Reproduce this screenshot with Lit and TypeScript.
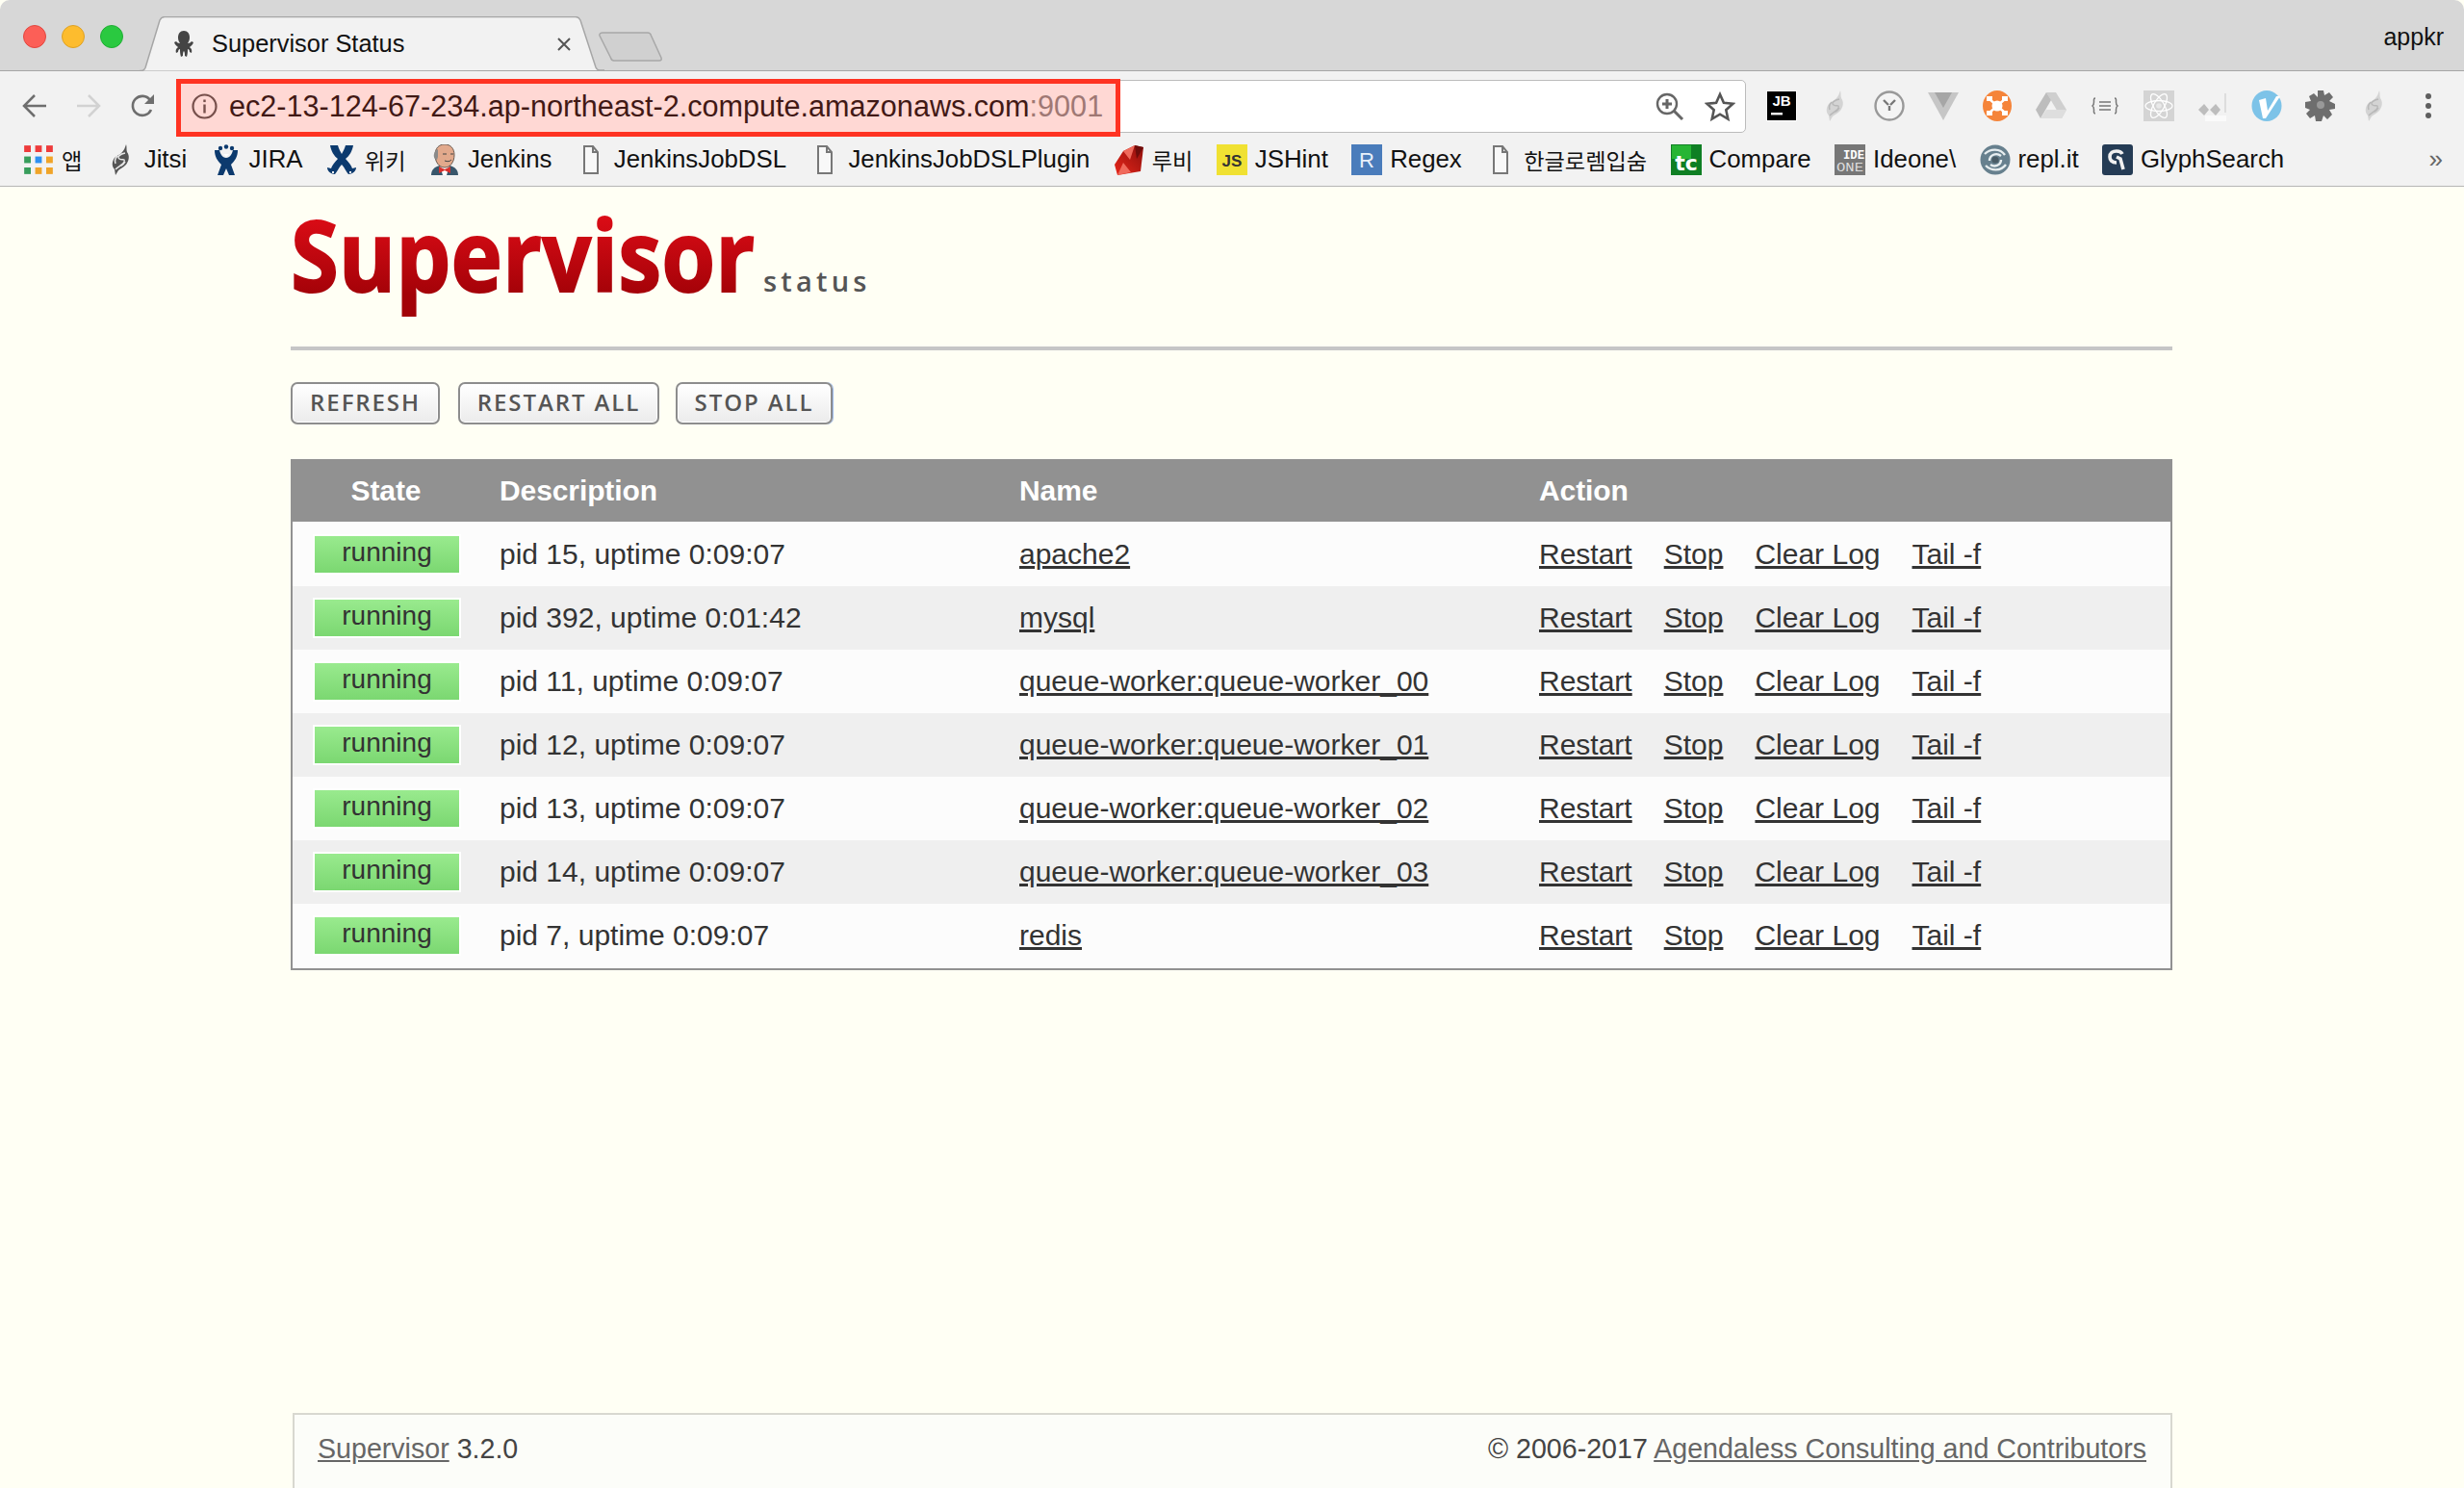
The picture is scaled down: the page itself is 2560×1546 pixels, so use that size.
import { LitElement, html, css } from "lit";
import { customElement } from "lit/decorators.js";

const feather = (c: string, line: string) => html`<svg class="ico" viewBox="0 0 32 32"><path fill="${c}" d="M21 0c1 3 0 5 1 8 3 4 2 9-1 13-3 3-6 4-8 6l-3 5-1-6c-3-3-3-8 0-12 3-3 6-3 8-6 2-2 3-5 4-8z"/><path fill="none" stroke="${line}" stroke-width="1.500" d="M20 9c-5 1-9 4-6 6 3 2 6-1 5 3-1 3-6 5-9 8M12 12c-2 2-3 5-2 8M16 22c2-1 3-2 4-4"/></svg>`;
const doc = html`<svg class="ico doc" viewBox="0 0 18 32"><path fill="#f8f8f8" stroke="#777" stroke-width="2" d="M2 2h9l5 6v22H2z"/><path fill="none" stroke="#777" stroke-width="2" d="M11 2v6h5"/></svg>`;

const icons: Record<string, unknown> = {
  apps: html`<svg class="ico" viewBox="0 0 28 28">
    <rect x="1" y="1" width="6" height="6" fill="#ee3b3b"/><rect x="11" y="1" width="6" height="6" fill="#ee3b3b"/><rect x="21" y="1" width="6" height="6" fill="#ee3b3b"/>
    <rect x="1" y="11" width="6" height="6" fill="#389e5c"/><rect x="11" y="11" width="6" height="6" fill="#2e90f0"/><rect x="21" y="11" width="6" height="6" fill="#f0a428"/>
    <rect x="1" y="21" width="6" height="6" fill="#389e5c"/><rect x="11" y="21" width="6" height="6" fill="#f0a428"/><rect x="21" y="21" width="6" height="6" fill="#f0a428"/></svg>`,
  jitsi: feather("#555", "#e8e8e8"),
  jira: html`<svg class="ico" viewBox="0 0 32 32"><circle cx="16" cy="2.500" r="2.200" fill="#0c3a6e"/><circle cx="10" cy="4" r="2.200" fill="#0c3a6e"/><circle cx="22" cy="4" r="2.200" fill="#0c3a6e"/><path fill="#0c3a6e" d="M4 6l5 0c1 4 3 8 7 8s6-4 7-8l5 0c0 7-3 11-7 15l4 11h-6l-3-7-3 7H7l4-11C7 17 4 13 4 6z"/><path fill="#fff" d="M13 10h6l-3 3z"/></svg>`,
  wiki: html`<svg class="ico" viewBox="0 0 32 32"><path fill="#0c3a6e" d="M4 1h8c1 4 3 7 4 9 1-2 3-5 4-9h8c-1 6-4 11-8 14 3 3 6 7 7 10l4-1c0 4-4 7-8 7-2-2-4-7-7-10-3 3-5 8-7 10-4 0-8-3-8-7l4 1c1-3 4-7 7-10C8 12 5 7 4 1z"/><path fill="#f2f2f2" d="M6 28h2v2H6zM24 28h2v2h-2z"/></svg>`,
  jenkins: html`<svg class="ico" viewBox="0 0 32 32"><path fill="#38566b" d="M2 32c0-6 4-9 9-10h10c5 1 9 4 9 10z"/><path fill="#fff" d="M11 22h10l-3 10h-4z"/><path fill="#e2a98c" stroke="#6a5a50" stroke-width="1" d="M6 11C6 4 10 0 16 0s10 4 10 11c0 7-4 13-10 13S6 18 6 11z"/><path fill="#8a8a8a" d="M5 10c1-3 2-4 4-5v8l-1 3c-2 0-4-3-3-6z"/><path fill="none" stroke="#444" stroke-width="1" d="M14 10h4M22 10h3M16 17c3 1 5 1 7-1"/><path fill="#d8302c" d="M10 23l6 3 6-3v7l-6-3-6 3z"/></svg>`,
  ruby: html`<svg class="ico" viewBox="0 0 32 32"><defs><linearGradient id="rb" x1="0" y1="1" x2="1" y2="0"><stop offset="0" stop-color="#e8261a"/><stop offset="1" stop-color="#8c0f0c"/></linearGradient></defs><path fill="url(#rb)" d="M22 1l9 2-3 25L4 32 1 21 10 7z"/><path fill="#f06a5c" d="M10 7l12-6-5 15zM4 32l6-13 8 10z"/><path fill="#6d0c0a" d="M22 1l9 2-7 12z"/></svg>`,
  js: html`<svg class="ico" viewBox="0 0 32 32"><rect width="32" height="32" fill="#f0e132"/><text x="16" y="23" text-anchor="middle" font-family="Liberation Sans, sans-serif" font-weight="700" font-size="17" fill="#333">JS</text></svg>`,
  r: html`<svg class="ico" viewBox="0 0 32 32"><rect width="32" height="32" fill="#4a7cbb"/><text x="16" y="24" text-anchor="middle" font-family="Liberation Sans, sans-serif" font-size="22" fill="#e8f0fa">R</text></svg>`,
  tc: html`<svg class="ico" viewBox="0 0 32 32"><rect width="32" height="32" fill="#0f7f24"/><rect x="1" y="1" width="20" height="14" fill="#27b534"/><text x="16" y="27" text-anchor="middle" font-family="DejaVu Sans, sans-serif" font-weight="700" font-size="22" fill="#fff">tc</text></svg>`,
  ide: html`<svg class="ico" viewBox="0 0 32 32"><rect width="32" height="32" fill="#777"/><text x="31" y="15" text-anchor="end" font-family="Liberation Mono, monospace" font-weight="700" font-size="13" fill="#fff" textLength="22" lengthAdjust="spacingAndGlyphs">IDE</text><text x="2" y="28" font-family="Liberation Mono, monospace" font-size="13" fill="#ddd" textLength="28" lengthAdjust="spacingAndGlyphs">ONE</text></svg>`,
  repl: html`<svg class="ico" viewBox="0 0 32 32"><circle cx="16" cy="16" r="15.500" fill="#67808e"/><path fill="none" stroke="#e8eef0" stroke-width="2.400" d="M5 10c6-6 16-6 21 1M27 21c-5 7-15 7-21 1M10 17c0-6 7-9 12-5M22 16c0 6-7 8-11 5"/><circle cx="16" cy="16" r="3.600" fill="#4a5c66"/></svg>`,
  glyph: html`<svg class="ico" viewBox="0 0 32 32"><rect width="32" height="32" rx="3" fill="#253c55"/><path fill="none" stroke="#f0f0f0" stroke-width="3.600" d="M15 19c-5 0-7-3-7-6 0-4 3-6 7-6 3 0 5 1 6 3M15 13l4 2 3 11"/></svg>`,
};

const exts = [
  html`<svg class="ico" viewBox="0 0 32 32"><rect x=".5" y=".5" width="31" height="31" fill="#000" stroke="#fff"/><text x="16" y="16" text-anchor="middle" font-family="Liberation Sans, sans-serif" font-weight="700" font-size="15" fill="#fff">JB</text><rect x="5" y="23" width="12" height="2.400" fill="#fff"/></svg>`,
  feather("#d4d4d4", "#b8b8b8"),
  html`<svg class="ico" viewBox="0 0 32 32"><circle cx="16" cy="16" r="14.500" fill="#f4f4f4" stroke="#999" stroke-width="2.400"/><path fill="none" stroke="#777" stroke-width="2.400" d="M10 10l5 5M22 10l-5 5M16 16v5"/></svg>`,
  html`<svg class="ico" viewBox="0 0 32 32"><path fill="#c6c6c6" d="M0 2h32L16 31z"/><path fill="#a6a6a6" d="M7 2h18l-9 16z"/></svg>`,
  html`<svg class="ico" viewBox="0 0 32 32"><ellipse cx="16" cy="16" rx="15" ry="16" fill="#f5843a"/><path fill="none" stroke="#fff" stroke-width="2.400" d="M8 9l16 14M24 9L8 23"/><circle cx="16" cy="16" r="5.500" fill="#fff"/><rect x="5" y="6" width="6" height="5" fill="#fff"/><rect x="21" y="6" width="6" height="5" fill="#fff"/><rect x="5" y="21" width="6" height="5" fill="#fff"/><rect x="21" y="21" width="6" height="5" fill="#fff"/></svg>`,
  html`<svg class="ico" viewBox="0 0 32 32"><path fill="#cfcfcf" d="M11 2h10l11 18-5 9z"/><path fill="#bdbdbd" d="M11 2L0 20l5 9L16 10z"/><path fill="#dedede" d="M5 29h22l5-9H11z"/></svg>`,
  html`<svg class="ico" viewBox="0 0 32 32"><path fill="none" stroke="#777" stroke-width="1.500" d="M6 8c-2 0-1.500 2-1.500 4s0 3-1.500 4c1.500 1 1.500 2 1.500 4s-.5 4 1.500 4M26 8c2 0 1.500 2 1.500 4s0 3 1.500 4c-1.500 1-1.500 2-1.500 4s.5 4-1.500 4M10 12h12M10 16h12M10 20h12"/></svg>`,
  html`<svg class="ico" viewBox="0 0 32 32"><rect width="32" height="32" fill="#d4d4d4"/><g fill="none" stroke="#fff" stroke-width="1.300"><ellipse cx="16" cy="16" rx="14" ry="5.500"/><ellipse cx="16" cy="16" rx="14" ry="5.500" transform="rotate(60 16 16)"/><ellipse cx="16" cy="16" rx="14" ry="5.500" transform="rotate(120 16 16)"/></g><circle cx="16" cy="16" r="2.800" fill="#e9e9e9"/></svg>`,
  html`<svg class="ico" viewBox="0 0 32 32"><path fill="#bdbdbd" d="M1 20l6-6 5 6-5 6zM13 20l6-6 5 6-5 6z"/><rect x="28" y="3" width="2" height="20" fill="#ddd"/><rect x="8" y="26" width="22" height="6" fill="#fafafa"/></svg>`,
  html`<svg class="ico" viewBox="0 0 32 32"><ellipse cx="16" cy="16" rx="15.500" ry="16" fill="#7dc3e8"/><path fill="#fff" d="M8 10l7-2 2 13 9-15h4L15 29h-3z"/></svg>`,
  html`<svg class="ico" viewBox="0 0 32 32"><path fill="#6e6e6e" d="M13 0h6l1 5 5-3 4 5-4 4 6 3v5l-6 1 3 5-5 5-4-4-2 6h-6l-1-6-5 3-4-5 4-4-5-2v-6l6-1-2-5 5-3 4 4z"/><circle cx="16" cy="15" r="4" fill="#999"/></svg>`,
  feather("#d4d4d4", "#b8b8b8"),
  html`<svg class="ico" viewBox="0 0 32 32"><circle cx="16" cy="6" r="3" fill="#5f5f5f"/><circle cx="16" cy="16" r="3" fill="#5f5f5f"/><circle cx="16" cy="26" r="3" fill="#5f5f5f"/></svg>`,
];

const bookmarks: [string, string][] = [
  ["apps", "앱"], ["jitsi", "Jitsi"], ["jira", "JIRA"], ["wiki", "위키"], ["jenkins", "Jenkins"],
  ["doc", "JenkinsJobDSL"], ["doc", "JenkinsJobDSLPlugin"], ["ruby", "루비"], ["js", "JSHint"], ["r", "Regex"],
  ["doc", "한글로렘입숨"], ["tc", "Compare"], ["ide", "Ideone\\"], ["repl", "repl.it"], ["glyph", "GlyphSearch"],
];

const procs: [string, string][] = [
  ["pid 15, uptime 0:09:07", "apache2"],
  ["pid 392, uptime 0:01:42", "mysql"],
  ["pid 11, uptime 0:09:07", "queue-worker:queue-worker_00"],
  ["pid 12, uptime 0:09:07", "queue-worker:queue-worker_01"],
  ["pid 13, uptime 0:09:07", "queue-worker:queue-worker_02"],
  ["pid 14, uptime 0:09:07", "queue-worker:queue-worker_03"],
  ["pid 7, uptime 0:09:07", "redis"],
];

@customElement("app-root")
export class AppRoot extends LitElement {
  static styles = css`
    :host { display: block; height: 1546px; overflow: hidden; background: #fffff4; font-family: "Liberation Sans", Arial, sans-serif; color: #333; }
    a { color: inherit; text-decoration: underline; }
    .ico { display: block; width: 32px; height: 32px; flex: none; }
    .ico.doc { width: 18px; margin: 0 7px; }

    .strip { display: flex; align-items: flex-start; box-sizing: border-box; height: 74px; background: #d7d7d7; border-bottom: 1px solid #a6a6a6; border-radius: 10px 10px 0 0; padding-left: 24px; }
    .light { width: 24px; height: 24px; border-radius: 50%; margin: 26px 16px 0 0; box-sizing: border-box; }
    .red { background: #fc5f57; border: 1px solid #e2463f; }
    .yellow { background: #fdbc2e; border: 1px solid #dea123; }
    .green { background: #2ac940; border: 1px solid #1fae33; margin-right: 1px; }
    .tab { position: relative; width: 483px; height: 57px; margin: 17px 0 -1px 16px; display: flex; align-items: center; box-sizing: border-box; padding-left: 36px; font-size: 25.400px; color: #111; flex: none; }
    .tab-bg { position: absolute; inset: 0; width: 100%; height: 100%; }
    .tab > *:not(.tab-bg) { position: relative; }
    .fav { width: 20px; height: 28px; margin-right: 19px; flex: none; }
    .title { margin-top: -1px; }
    .close { margin-left: auto; margin-right: 34px; width: 16px; height: 16px; flex: none; }
    .newtab { width: 66px; height: 31px; margin: 33px 0 0 -6px; flex: none; }
    .user { margin: 24px 21px 0 auto; font-size: 25px; color: #111; }

    .toolbar { display: flex; align-items: flex-start; height: 70px; background: #f2f2f2; box-sizing: border-box; padding: 8px 0 0 23px; }
    .nav { width: 26px; height: 26px; margin: 15px 30px 0 0; flex: none; }
    .nav.reload { margin-right: 22px; }
    .omni { position: relative; box-sizing: border-box; width: 1631px; height: 55px; margin-top: 1px; background: #fff; border: 1px solid #bcbcbc; border-radius: 5px; display: flex; align-items: center; padding-left: 15px; font-size: 30.600px; color: #111; flex: none; }
    .info { width: 27px; height: 27px; margin-right: 12px; flex: none; }
    .port { color: #888; }
    .mark { position: absolute; left: -1px; top: -2px; width: 981px; height: 60px; box-sizing: border-box; border: 5px solid #ff3322; background: rgba(255, 60, 40, 0.2); }
    .omni-r { margin-left: auto; display: flex; align-items: center; gap: 20px; margin-right: 10px; }
    .omni-r svg { width: 32px; height: 32px; display: block; }
    .exts { display: flex; gap: 24px; margin: 12px 0 0 21px; }

    .bm { display: flex; align-items: center; height: 50px; background: #f2f2f2; border-bottom: 1px solid #b5b5b5; box-sizing: border-box; padding: 0 22px 6px 24px; font-size: 25.800px; color: #111; font-family: "Liberation Sans", "Noto Sans CJK KR", sans-serif; }
    .bm-list { display: flex; align-items: center; gap: 24.400px; }
    .bm-item { display: flex; align-items: center; gap: 8px; white-space: nowrap; }
    .ko { font-size: 23.200px; }
    .chev { margin-left: auto; color: #666; font-size: 26px; }

    .page { padding: 0 303px 0 302px; }
    .logo { display: flex; align-items: baseline; box-sizing: border-box; height: 160px; padding-top: 19.400px; font-family: "Open Sans", sans-serif; }
    .sup-box { width: 491px; flex: none; white-space: nowrap; }
    .sup { display: inline-block; padding-bottom: 30px; font-size: 102px; line-height: 1; font-weight: 700; transform: scaleX(0.887); transform-origin: left top; background: linear-gradient(#dc0c16 8%, #a40208 70%, #a00208); -webkit-background-clip: text; background-clip: text; color: transparent; -webkit-text-stroke: 1.800px transparent; }
    .status { font-size: 29px; font-weight: 600; color: #555; letter-spacing: 4.200px; }
    .rule { height: 4px; background: #c6c6c6; margin-top: 6px; }
    .btns { display: flex; margin-top: 33px; font-family: "Open Sans", sans-serif; }
    .btn { box-sizing: border-box; height: 44px; padding-bottom: 3px; display: flex; align-items: center; justify-content: center; border: 2px solid #8d8d8d; border-radius: 7px; background: linear-gradient(#ffffff, #ebebeb); color: #555; font-size: 24px; font-weight: 600; letter-spacing: 1.900px; box-shadow: inset 0 0 0 1px #fff; text-decoration: none; }
    .b1 { width: 155px; margin-right: 19px; }
    .b2 { width: 209px; margin-right: 17px; }
    .b3 { width: 163px; box-shadow: inset 0 0 0 1px #fff, 1px 0 0 #9ab9ee; }

    .table { margin-top: 36px; border: solid #919191; border-width: 0 2px 2px; width: 1955px; box-sizing: border-box; font-size: 30px; }
    .row { display: grid; grid-template-columns: 215px 540px 540px 1fr; align-items: center; height: 66px; background: #efefef; }
    .row:nth-child(even) { background: #fcfcfc; }
    .row.first { height: 67px; padding-top: 1px; box-sizing: border-box; }
    .row.last { height: 67px; padding-bottom: 1px; box-sizing: border-box; }
    .head { height: 65px; background: #919191; color: #fff; font-weight: 700; margin: 0 -2px; padding-left: 2px; }
    .head .st { width: 150px; margin-left: 22px; text-align: center; }
    .head div { letter-spacing: -0.1px; }
    .badge { box-sizing: border-box; width: 154px; height: 42px; margin-left: 21px; border: 2px solid #fff; background: linear-gradient(#99ea8e, #7bd771); color: #333; font-size: 28px; text-align: center; line-height: 34px; }
    .actions { display: flex; gap: 33px; }

    .footer { box-sizing: border-box; height: 100px; margin: 460px 0 0 2px; border: solid #d8d8d0; border-width: 2px 2px 0; background: #fcfdf9; display: flex; justify-content: space-between; padding: 17px 25px 0 24px; font-size: 28.600px; color: #444; line-height: 36px; }
    .footer a { color: #666; }
  `;

  render() {
    return html`
      <div class="strip">
        <div class="light red"></div><div class="light yellow"></div><div class="light green"></div>
        <div class="tab">
          <svg class="tab-bg" viewBox="0 0 483 57" preserveAspectRatio="none"><path fill="#f2f2f2" stroke="#a6a6a6" stroke-width="1.500" d="M0 56.500h2c2 0 3-1 4-3L21 4c1-2 2-3.500 5-3.500h427c3 0 4 1.500 5 3.500l16 49c1 2 2 3 4 3h5"/></svg>
          <svg class="fav" viewBox="0 0 20 28"><path fill="#444" d="M10 0c4 0 6 3 6 7 0 3-1 4-2 6 2 0 3-1 4-2l2 1c-1 3-3 4-4 5 1 1 3 2 2 6l-2-1c0-2-1-3-2-3 0 2 0 5-1 8l-2-1c0-2 0-4-1-5-1 1-1 3-1 5l-2 1c-1-3-1-6-1-8-1 0-2 1-2 3l-2 1c-1-4 1-5 2-6-1-1-3-2-4-5l2-1c1 1 2 2 4 2C5 11 4 10 4 7c0-4 2-7 6-7z"/></svg>
          <span class="title">Supervisor Status</span>
          <svg class="close" viewBox="0 0 16 16"><path stroke="#555" stroke-width="2" d="M2 2l12 12M14 2L2 14"/></svg>
        </div>
        <svg class="newtab" viewBox="0 0 66 31"><path fill="#d0d0d0" stroke="#a8a8a8" stroke-width="1.500" d="M4 1h47c2 0 3 1 3.500 3L65 27c.5 2 0 3-2 3H16c-2 0-3-1-3.500-3L1 4C.5 2 2 1 4 1z"/></svg>
        <div class="user">appkr</div>
      </div>

      <div class="toolbar">
        <svg class="nav" viewBox="0 0 26 26"><path fill="none" stroke="#6e6e6e" stroke-width="2.500" d="M25 13H3M13 2L2 13l11 11"/></svg>
        <svg class="nav" viewBox="0 0 26 26"><path fill="none" stroke="#d2d2d2" stroke-width="2.500" d="M1 13h22M13 2l11 11-11 11"/></svg>
        <svg class="nav reload" viewBox="0 0 26 26"><path fill="none" stroke="#6e6e6e" stroke-width="2.600" d="M22 17a10 10 0 1 1-1-10"/><path fill="#6e6e6e" d="M25 1v10H15z"/></svg>
        <div class="omni">
          <svg class="info" viewBox="0 0 27 27"><circle cx="13.500" cy="13.500" r="12" fill="none" stroke="#555" stroke-width="2.200"/><rect x="12.300" y="11.500" width="2.400" height="9" fill="#555"/><rect x="12.300" y="6.500" width="2.400" height="2.600" fill="#555"/></svg>
          <span>ec2-13-124-67-234.ap-northeast-2.compute.amazonaws.com<span class="port">:9001</span></span>
          <div class="omni-r">
            <svg viewBox="0 0 32 32"><circle cx="13" cy="13" r="10" fill="none" stroke="#666" stroke-width="2.400"/><path stroke="#666" stroke-width="3" d="M20 20l9 9M8 13h10M13 8v10" fill="none"/></svg>
            <svg viewBox="0 0 32 32"><path fill="none" stroke="#555" stroke-width="2.600" d="M16 3l3.900 8.800 9.600 1-7.200 6.400 2 9.400L16 23.700l-8.300 4.900 2-9.400-7.200-6.400 9.600-1z"/></svg>
          </div>
          <div class="mark"></div>
        </div>
        <div class="exts">${exts}</div>
      </div>

      <div class="bm">
        <div class="bm-list">
          ${bookmarks.map(([k, t]) => html`<div class="bm-item">${k === "doc" ? doc : icons[k]}<span class="${/[가-힣]/.test(t) ? "ko" : ""}">${t}</span></div>`)}
        </div>
        <span class="chev">»</span>
      </div>

      <div class="page">
        <div class="logo">
          <div class="sup-box"><span class="sup">Supervisor</span></div>
          <span class="status">status</span>
        </div>
        <div class="rule"></div>
        <div class="btns">
          <a class="btn b1">REFRESH</a><a class="btn b2">RESTART ALL</a><a class="btn b3">STOP ALL</a>
        </div>
        <div class="table">
          <div class="row head"><div class="st">State</div><div>Description</div><div>Name</div><div>Action</div></div>
          ${procs.map(([d, n], i) => html`
            <div class="row ${i === 0 ? "first" : ""} ${i === procs.length - 1 ? "last" : ""}">
              <div class="badge">running</div>
              <div>${d}</div>
              <div><a href="#">${n}</a></div>
              <div class="actions"><a href="#">Restart</a><a href="#">Stop</a><a href="#">Clear Log</a><a href="#">Tail -f</a></div>
            </div>`)}
        </div>
        <div class="footer">
          <div><a href="#">Supervisor</a> 3.2.0</div>
          <div>© 2006-2017 <a href="#">Agendaless Consulting and Contributors</a></div>
        </div>
      </div>
    `;
  }
}
